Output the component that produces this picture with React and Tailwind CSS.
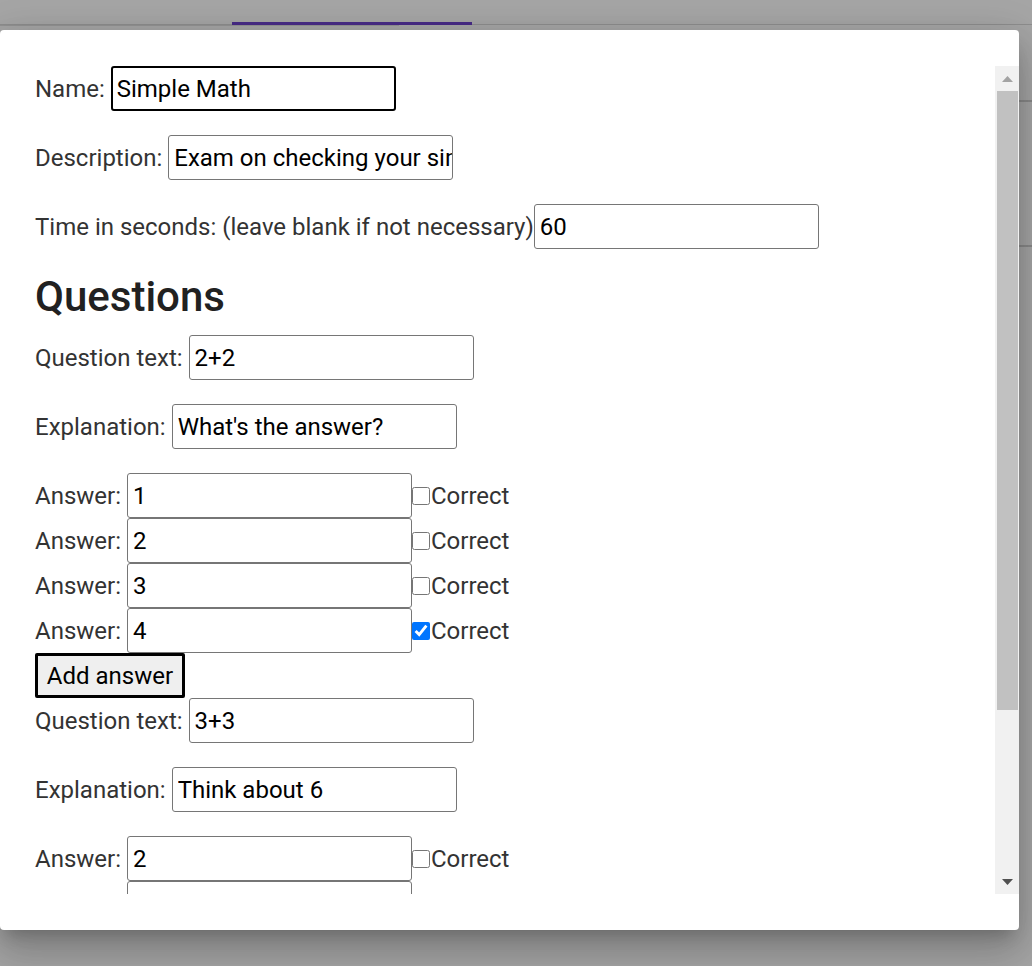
import React from "react";

function Field({ label, value, focused, mb = true }) {
  return (
    <div className={"flex items-center h-[45px] " + (mb ? "mb-[24px]" : "")}>
      <span className="whitespace-pre">{label}</span>
      <input
        defaultValue={value}
        className={
          "w-[285px] h-[45px] shrink-0 rounded-[3px] bg-white text-black text-[24px] font-[Roboto,sans-serif] outline-none " +
          (focused ? "border-2 border-black pl-[4px]" : "border border-[#767676] pl-[5px]")
        }
      />
    </div>
  );
}

function Answer({ value, checked }) {
  return (
    <div className="flex items-center h-[45px]">
      <span className="whitespace-pre">{"Answer:\u00a0"}</span>
      <input
        defaultValue={value}
        className="w-[285px] h-[45px] shrink-0 rounded-[3px] bg-white text-black text-[24px] font-[Roboto,sans-serif] outline-none border border-[#767676] pl-[5px]"
      />
      <input type="checkbox" defaultChecked={checked} className="w-[18px] h-[18px] m-0 shrink-0" />
      <span className="ml-[1px]">Correct</span>
    </div>
  );
}

function Question({ text, explanation, answers }) {
  return (
    <div>
      <Field label={"Question text:\u00a0"} value={text} />
      <Field label={"Explanation:\u00a0"} value={explanation} />
      {answers.map((a, i) => (
        <Answer key={i} value={a.v} checked={a.c} />
      ))}
      <button className="block h-[45px] w-[150px] border-[3px] border-black bg-[#efefef] text-[24px] text-black font-[Roboto,sans-serif] rounded-[2px]">
        Add answer
      </button>
    </div>
  );
}

export default function App() {
  return (
    <div className="relative w-[1032px] h-[966px] overflow-hidden bg-[#a6a6a6] font-[Roboto,sans-serif]">
      {/* background page (tabs) */}
      <div className="h-[22px]" />
      <div className="relative h-[4px]">
        <div className="absolute left-0 top-[2px] w-full h-[1px] bg-[#8e8e8e]" />
        <div className="absolute left-0 top-[3px] w-[399px] h-[1px] bg-[#939393]" />
        <div className="absolute left-[232px] top-0 w-[240px] h-[3px] bg-[#482b86]" />
      </div>
      <div className="absolute right-0 top-[100px] w-[14px] h-[2px] bg-[#8a8a8a]" />
      <div className="absolute right-0 top-[245px] w-[14px] h-[2px] bg-[#8a8a8a]" />

      {/* dialog */}
      <div className="absolute left-0 top-[30px] w-[1019px] h-[900px] bg-white rounded-[4px] py-[36px] flex shadow-[0px_11px_15px_-7px_rgba(0,0,0,0.2),0px_24px_38px_3px_rgba(0,0,0,0.14),0px_9px_46px_8px_rgba(0,0,0,0.12)]">
        <div className="flex-1 h-[828px] overflow-hidden pl-[35px] text-[24px] text-[#333333]">
          <Field label={"Name:\u00a0"} value="Simple Math" focused />
          <Field label={"Description:\u00a0"} value="Exam on checking your simple math skills" />
          <Field label="Time in seconds: (leave blank if not necessary)" value="60" />
          <h1 className="text-[42px] font-medium leading-[48px] mb-[14px] text-[#212121]">Questions</h1>
          <Question
            text="2+2"
            explanation="What's the answer?"
            answers={[
              { v: "1", c: false },
              { v: "2", c: false },
              { v: "3", c: false },
              { v: "4", c: true },
            ]}
          />
          <Question
            text="3+3"
            explanation="Think about 6"
            answers={[
              { v: "2", c: false },
              { v: "6", c: true },
              { v: "8", c: false },
            ]}
          />
        </div>
        {/* scrollbar */}
        <div className="w-[24px] h-[828px] bg-[#f1f1f1] flex flex-col shrink-0">
          <div className="h-[25px] flex items-center justify-center">
            <svg width="11" height="6" viewBox="0 0 11 6"><path d="M5.5 0 L11 6 L0 6 Z" fill="#a3a3a3" /></svg>
          </div>
          <div className="h-[619px] ml-[2px] mr-[1px] bg-[#c1c1c1]" />
          <div className="flex-1" />
          <div className="h-[25px] flex items-center justify-center">
            <svg width="11" height="6" viewBox="0 0 11 6"><path d="M0 0 L11 0 L5.5 6 Z" fill="#505050" /></svg>
          </div>
        </div>
      </div>
    </div>
  );
}
